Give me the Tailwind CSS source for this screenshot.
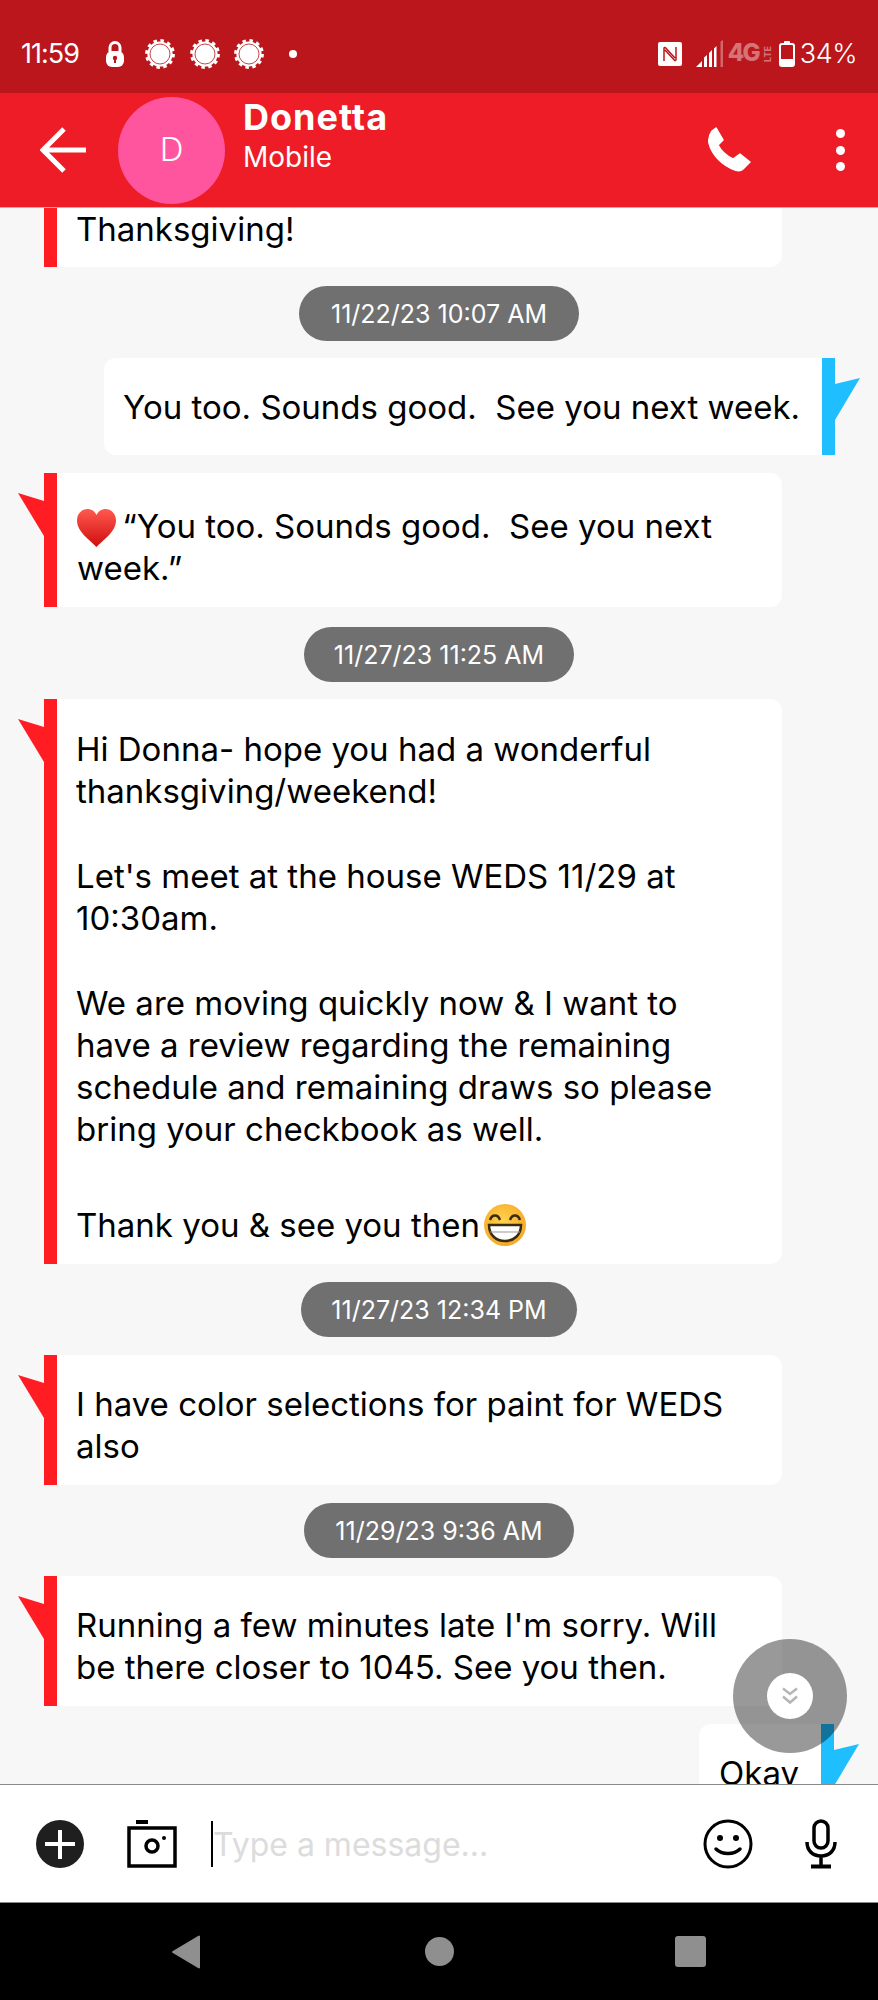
<!DOCTYPE html>
<html lang="en">
<head>
    <meta charset="UTF-8">
    <meta name="viewport" content="width=device-width, initial-scale=1.0">
    <title>Donetta</title>
    <script src="https://cdn.jsdelivr.net/npm/@tailwindcss/browser@4"></script>
</head>
<body class="bg-black [font-family:Inter,sans-serif] antialiased">
<div class="w-[878px] h-[2000px] flex flex-col overflow-hidden">

    <!-- Status bar -->
    <div class="h-[93px] bg-[#ba161c] text-white flex items-center pl-[21px] pr-[21px] pt-[15px] shrink-0">
        <span class="text-[27px] w-[84px] tracking-[-1px]">11:59</span>
        <svg class="w-[20px] h-[28px] mr-[20px]" viewBox="0 0 20 28">
            <path d="M5 12V7.5a5 5 0 0 1 10 0V12" fill="none" stroke="#fff" stroke-width="3"/>
            <rect x="1" y="11" width="18" height="16" rx="6" fill="#fff"/>
            <circle cx="10" cy="18" r="2.2" fill="#ba161c"/>
            <rect x="9" y="18" width="2" height="5" fill="#ba161c"/>
        </svg>
        <svg class="w-[30px] h-[30px] mr-[15px]" viewBox="0 0 30 30"><circle cx="15" cy="15" r="13.4" fill="none" stroke="#fff" stroke-width="3" stroke-dasharray="3.5 3.52"/><circle cx="15" cy="15" r="12.6" fill="#fff"/><circle cx="15" cy="15" r="10" fill="none" stroke="#ba161c" stroke-width="0.8"/></svg>
        <svg class="w-[30px] h-[30px] mr-[14px]" viewBox="0 0 30 30"><circle cx="15" cy="15" r="13.4" fill="none" stroke="#fff" stroke-width="3" stroke-dasharray="3.5 3.52"/><circle cx="15" cy="15" r="12.6" fill="#fff"/><circle cx="15" cy="15" r="10" fill="none" stroke="#ba161c" stroke-width="0.8"/></svg>
        <svg class="w-[30px] h-[30px] mr-[25px]" viewBox="0 0 30 30"><circle cx="15" cy="15" r="13.4" fill="none" stroke="#fff" stroke-width="3" stroke-dasharray="3.5 3.52"/><circle cx="15" cy="15" r="12.6" fill="#fff"/><circle cx="15" cy="15" r="10" fill="none" stroke="#ba161c" stroke-width="0.8"/></svg>
        <span class="w-[8px] h-[8px] rounded-full bg-white"></span>

        <svg class="w-[24px] h-[24px] ml-auto mr-[14px]" viewBox="0 0 24 24">
            <rect width="24" height="24" rx="2" fill="#fff"/>
            <path d="M6 19V6.500c0-1 1-1.300 1.700-.6L17 16M18 5v12.500c0 1-1 1.300-1.700.6L7 8" fill="none" stroke="#ba161c" stroke-width="1.500"/>
        </svg>
        <svg class="w-[28px] h-[28px]" viewBox="0 0 28 28">
            <path d="M0 27L6 21V27ZM8 17.500L11 15V27H8ZM13 13L16 10V27H13ZM18 8.500L20.500 6V27H18Z" fill="#fff"/>
            <path d="M24.500 1.500L27 0V27H24.500Z" fill="#fff" opacity="0.35"/>
        </svg>
        <span class="relative w-[46px] h-[26px] ml-[4px] opacity-40">
            <span class="absolute left-0 top-[-4px] text-[24px] font-extrabold tracking-[-2px] leading-[32px]">4G</span>
            <span class="absolute left-[32px] top-[8px] text-[9px] font-bold leading-[10px] -rotate-90">LTE</span>
        </span>
        <svg class="w-[16px] h-[26px] ml-[5px]" viewBox="0 0 16 26">
            <rect x="5" y="0" width="6" height="4" rx="1" fill="#fff"/>
            <rect x="1" y="3" width="14" height="22" rx="2" fill="none" stroke="#fff" stroke-width="2"/>
            <rect x="1" y="18" width="14" height="7" rx="1" fill="#fff"/>
        </svg>
        <span class="text-[27px] ml-[5px] tracking-[-0.5px] font-light">34%</span>
    </div>

    <!-- Header -->
    <div class="h-[114px] bg-[#ed1c26] flex items-center pl-[40px] pr-[33px] text-white shrink-0">
        <svg class="w-[46px] h-[46px] mr-[32px]" viewBox="0 0 46 46" fill="none" stroke="#fff" stroke-width="5">
            <path d="M46 23H4M24 2L3 23L24 44"/>
        </svg>
        <div class="w-[107px] h-[107px] rounded-full bg-[#ff559f] flex items-center justify-center text-[33px] font-light">D</div>
        <div class="ml-[18px] self-start flex flex-col">
            <span class="text-[36px] font-bold leading-[44px] mt-[2px] tracking-[1px]">Donetta</span>
            <span class="text-[28px] leading-[34px] mt-[1px]">Mobile</span>
        </div>
        <svg class="w-[44px] h-[46px] ml-auto mr-[84px]" viewBox="0 0 44 46" fill="#fff" stroke="#fff" stroke-width="1.500" stroke-linejoin="round">
            <path d="M8 1L15 13L10 18C13 24 19 29 25 32L32 27L42 35L35 42C33 44 30 44 27 43C14 38 4 28 1 16C0 11 2 7 4 4Z"/>
        </svg>
        <div class="flex flex-col gap-[7.500px]">
            <span class="w-[9px] h-[9px] rounded-full bg-white"></span>
            <span class="w-[9px] h-[9px] rounded-full bg-white"></span>
            <span class="w-[9px] h-[9px] rounded-full bg-white"></span>
        </div>
    </div>
    <div class="h-px bg-[#e0a6aa] shrink-0"></div>

    <!-- Conversation -->
    <div class="relative h-[1576px] bg-[#f7f7f7] overflow-hidden flex flex-col gap-[18px] text-[33px] leading-[42px] text-black shrink-0">

        <div class="shrink-0 ml-[44px] w-[738px] h-[59px] border-l-[13px] border-[#ff1d23] bg-white rounded-br-xl pl-[19px] whitespace-nowrap">Thanksgiving!</div>

        <div class="shrink-0 self-center h-[55px] mt-[1px] -mb-[1px] px-[32px] rounded-full bg-[#707070] text-white text-[25px] flex items-center">11/22/23 10:07 AM</div>

        <div class="shrink-0 self-end mr-[43px] h-[97px] border-r-[13px] border-[#1ebeff] bg-white rounded-l-xl pl-[19px] pr-[22px] flex items-center relative">
            <span class="whitespace-pre">You too. Sounds good.  See you next week.</span>
            <svg class="absolute left-full top-0 ml-[13px] w-[25px] h-[97px]" viewBox="0 0 25 97"><path d="M0 26L25 20L0 62Z" fill="#1ebeff"/></svg>
        </div>

        <div class="shrink-0 relative ml-[44px] w-[738px] h-[134px] border-l-[13px] border-[#ff1d23] bg-white rounded-r-xl pl-[20px] pt-[32px]">
            <svg class="absolute right-full top-0 mr-[13px] w-[26px] h-[97px]" viewBox="0 0 26 97"><path d="M26 28L0 20L26 63Z" fill="#ff1d23"/></svg>
            <p class="whitespace-pre"><svg class="inline-block relative top-[4px] align-[-6px] mr-[-3px] w-[39px] h-[39px]" viewBox="0 0 39 39"><defs><linearGradient id="heart" x1="0" y1="0" x2="0" y2="1"><stop offset="0" stop-color="#ff5a4f"/><stop offset="1" stop-color="#cf0d0d"/></linearGradient></defs><path d="M19.500 38C13 31 0 23 0 11.500C0 4.500 5 0 10.500 0C14.500 0 17.800 2.300 19.500 6C21.200 2.300 24.500 0 28.500 0C34 0 39 4.500 39 11.500C39 23 26 31 19.500 38Z" fill="url(#heart)"/></svg> “You too. Sounds good.  See you next<br>week.”</p>
        </div>

        <div class="shrink-0 self-center h-[55px] mt-[2px] -mb-[1px] px-[30px] rounded-full bg-[#707070] text-white text-[25px] flex items-center">11/27/23 11:25 AM</div>

        <div class="shrink-0 relative ml-[44px] w-[738px] h-[565px] border-l-[13px] border-[#ff1d23] bg-white rounded-r-xl pl-[19px] pt-[29px] whitespace-nowrap">
            <svg class="absolute right-full top-0 mr-[13px] w-[26px] h-[97px]" viewBox="0 0 26 97"><path d="M26 28L0 20L26 63Z" fill="#ff1d23"/></svg>
            <p>Hi Donna- hope you had a wonderful<br>thanksgiving/weekend!</p>
            <p class="mt-[43px]">Let's meet at the house WEDS 11/29 at<br>10:30am.</p>
            <p class="mt-[43px]">We are moving quickly now &amp; I want to<br>have a review regarding the remaining<br>schedule and remaining draws so please<br>bring your checkbook as well.</p>
            <p class="mt-[53px] flex items-center">Thank you &amp; see you then<svg class="w-[44px] h-[44px] ml-[3px] shrink-0" viewBox="0 0 44 44">
                <defs><radialGradient id="grin" cx="0.45" cy="0.4" r="0.65"><stop offset="0" stop-color="#ffd24f"/><stop offset="1" stop-color="#f5a623"/></radialGradient></defs>
                <circle cx="22" cy="22" r="21" fill="url(#grin)"/>
                <path d="M7 17C9 11 15 11 17 17M27 17C29 11 35 11 37 17" fill="none" stroke="#3a2a10" stroke-width="2.500"/>
                <path d="M6 22H38C38 32 31 38 22 38C13 38 6 32 6 22Z" fill="#fff" stroke="#3a2a10" stroke-width="2.500"/>
                <path d="M7 29H37" stroke="#999" stroke-width="1"/>
            </svg></p>
        </div>

        <div class="shrink-0 self-center h-[55px] px-[30px] rounded-full bg-[#707070] text-white text-[25px] flex items-center">11/27/23 12:34 PM</div>

        <div class="shrink-0 relative ml-[44px] w-[738px] h-[130px] border-l-[13px] border-[#ff1d23] bg-white rounded-r-xl pl-[19px] pt-[28px] whitespace-nowrap">
            <svg class="absolute right-full top-0 mr-[13px] w-[26px] h-[97px]" viewBox="0 0 26 97"><path d="M26 28L0 20L26 63Z" fill="#ff1d23"/></svg>
            I have color selections for paint for WEDS<br>also
        </div>

        <div class="shrink-0 self-center h-[55px] px-[31px] rounded-full bg-[#707070] text-white text-[25px] flex items-center">11/29/23 9:36 AM</div>

        <div class="shrink-0 relative ml-[44px] w-[738px] h-[130px] border-l-[13px] border-[#ff1d23] bg-white rounded-r-xl pl-[19px] pt-[28px] whitespace-nowrap">
            <svg class="absolute right-full top-0 mr-[13px] w-[26px] h-[97px]" viewBox="0 0 26 97"><path d="M26 28L0 20L26 63Z" fill="#ff1d23"/></svg>
            Running a few minutes late I'm sorry. Will<br>be there closer to 1045. See you then.
        </div>

        <div class="shrink-0 self-end mr-[44px] h-[97px] border-r-[13px] border-[#1ebeff] bg-white rounded-l-xl pl-[20px] pr-[22px] flex items-center relative">
            <span>Okay</span>
            <svg class="absolute left-full top-0 ml-[13px] w-[25px] h-[97px]" viewBox="0 0 25 97"><path d="M0 26L25 20L0 62Z" fill="#1ebeff"/></svg>
        </div>

        <!-- Scroll to bottom -->
        <div class="absolute right-[31px] bottom-[31px] w-[114px] h-[114px] rounded-full bg-black/40 flex items-center justify-center">
            <div class="w-[46px] h-[46px] rounded-full bg-white flex items-center justify-center">
                <svg class="w-[18px] h-[18px]" viewBox="0 0 18 18" fill="none" stroke="#b5b5b5" stroke-width="2.500"><path d="M2 1.500L9 7L16 1.500M2 9.500L9 15.500L16 9.500"/></svg>
            </div>
        </div>
    </div>

    <!-- Composer -->
    <div class="h-[119px] bg-white border-y border-[#8a8a8a] flex items-center pl-[36px] shrink-0">
        <svg class="w-[48px] h-[48px]" viewBox="0 0 48 48">
            <circle cx="24" cy="24" r="24" fill="#1f1f1f"/>
            <path d="M24 10V39M9 24H39" stroke="#fff" stroke-width="4"/>
        </svg>
        <svg class="w-[50px] h-[48px] ml-[43px]" viewBox="0 0 50 48">
            <rect x="9" y="0" width="12" height="4" fill="#000"/>
            <rect x="2" y="8" width="46" height="38" fill="none" stroke="#000" stroke-width="3.500"/>
            <circle cx="25" cy="26" r="6" fill="none" stroke="#000" stroke-width="3.500"/>
            <circle cx="37" cy="18" r="2" fill="#000"/>
        </svg>
        <span class="w-[2px] h-[46px] bg-black ml-[34px]"></span>
        <span class="text-[32px] text-[#dcdcdc] pt-[2px]">Type a message...</span>
        <svg class="w-[50px] h-[50px] ml-auto" viewBox="0 0 50 50" fill="none" stroke="#000">
            <circle cx="25" cy="25" r="23" stroke-width="3"/>
            <circle cx="17" cy="19" r="3" fill="#000" stroke="none"/>
            <circle cx="33" cy="19" r="3" fill="#000" stroke="none"/>
            <path d="M13 30C19 36 31 36 37 30" stroke-width="3.500" stroke-linecap="round"/>
        </svg>
        <svg class="w-[32px] h-[50px] ml-[52px] mr-[41px]" viewBox="0 0 32 50" fill="none" stroke="#000" stroke-width="3.500">
            <rect x="9" y="2" width="14" height="27" rx="7"/>
            <path d="M2 23C2 32 8 37 16 37C24 37 30 32 30 23M16 37V46"/>
            <path d="M6 47.500H26" stroke-width="4"/>
        </svg>
    </div>

    <!-- Navigation -->
    <div class="h-[97px] bg-black flex items-center shrink-0 pl-[171px]">
        <svg class="w-[30px] h-[34px]" viewBox="0 0 30 34"><path d="M28 1.500V32.500L2 17Z" fill="#8f8f8f" stroke="#8f8f8f" stroke-width="2" stroke-linejoin="round"/></svg>
        <span class="w-[29px] h-[29px] rounded-full bg-[#8f8f8f] ml-[224px]"></span>
        <span class="w-[31px] h-[31px] rounded-[3px] bg-[#8f8f8f] ml-[221px]"></span>
    </div>
</div>
</body>
</html>
